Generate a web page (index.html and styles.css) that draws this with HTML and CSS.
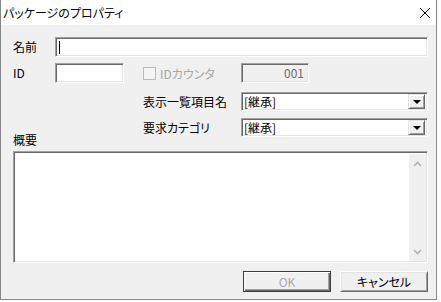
FILE: index.html
```html
<!DOCTYPE html>
<html lang="ja">

<head>
    <meta charset="utf8">
    <title>パッケージのプロパティ</title>
    <link rel="stylesheet" href="styles.css">
</head>

<body>
    <div class="window">
        <div class="titlebar">
            <span class="title">パッケージのプロパティ</span>
            <svg class="close" width="12" height="12" viewBox="0 0 12 12">
                <path d="M1 1 L11 11 M11 1 L1 11" stroke="#000" stroke-width="1" fill="none"/>
            </svg>
        </div>

        <div class="content">
            <div class="row">
                <span class="label">名前</span>
                <div class="field name"><span class="caret"></span></div>
            </div>

            <div class="row id-row">
                <span class="label">ID</span>
                <div class="field id"></div>
                <div class="check">
                    <span class="box"></span>
                    <span class="check-text">IDカウンタ</span>
                </div>
                <div class="field counter">001</div>
            </div>

            <div class="row combo-row first">
                <span class="combo-label">表示一覧項目名</span>
                <div class="field combo">
                    <span class="value">[継承]</span>
                    <span class="drop"><span class="arrow"></span></span>
                </div>
            </div>

            <div class="row combo-row">
                <span class="combo-label">要求カテゴリ</span>
                <div class="field combo">
                    <span class="value">[継承]</span>
                    <span class="drop"><span class="arrow"></span></span>
                </div>
            </div>

            <div class="memo-label">概要</div>
            <div class="field memo">
                <div class="scrollbar">
                    <svg width="9" height="6" viewBox="0 0 9 6">
                        <path d="M1 5 L4.5 1.5 L8 5" stroke="#b4b4b4" stroke-width="1.6" fill="none"/>
                    </svg>
                    <svg width="9" height="6" viewBox="0 0 9 6">
                        <path d="M1 1 L4.5 4.5 L8 1" stroke="#b4b4b4" stroke-width="1.6" fill="none"/>
                    </svg>
                </div>
            </div>

            <div class="buttons">
                <button class="btn default" disabled>OK</button>
                <button class="btn">キャンセル</button>
            </div>
        </div>
    </div>
</body>

</html>
```

FILE: styles.css
```css
* {
    box-sizing: border-box;
}

body {
    margin: 0;
    background-color: #fdfdfd;
    font-family: "Noto Sans CJK JP", "Liberation Sans", sans-serif;
    font-size: 12px;
    font-feature-settings: "palt";
    color: #000;
}

.window {
    width: 437px;
    height: 300px;
    display: flex;
    flex-direction: column;
    border: 1px solid #888;
    border-top: 0 none;
    background-color: #f0f0f0;
}

.titlebar {
    height: 25px;
    flex-shrink: 0;
    display: flex;
    align-items: center;
    justify-content: space-between;
    padding: 0 5px 0 2px;
    background-color: #fff;
}

.titlebar .title {
    line-height: 14px;
    margin-top: 1px;
}

.content {
    display: flex;
    flex-direction: column;
    padding: 12px 8px 7px 12px;
}

/* sunken 3d field */
.field {
    background-color: #fff;
    border: 1px solid;
    border-color: #a0a0a0 #fff #fff #a0a0a0;
    box-shadow: inset 1px 1px #696969, inset -1px -1px #e3e3e3;
}

.row {
    display: flex;
    align-items: center;
    height: 20px;
}

.label {
    width: 42px;
    line-height: 14px;
}

.field.name {
    flex-grow: 1;
    height: 20px;
    padding: 3px 0 0 3px;
}

.caret {
    display: block;
    width: 1px;
    height: 13px;
    background-color: #000;
}

.id-row {
    margin-top: 6px;
}

.field.id {
    width: 69px;
    height: 20px;
}

.check {
    display: flex;
    align-items: center;
    column-gap: 4px;
    width: 98px;
    margin-left: 19px;
    color: #a6a6a6;
}

.check .box {
    width: 13px;
    height: 13px;
    border: 1px solid #b9b9b9;
    background-color: #f4f4f4;
}

.field.counter {
    width: 68px;
    height: 20px;
    padding: 2px 4px 0 0;
    text-align: right;
    line-height: 14px;
    background-color: #f0f0f0;
    color: #6d6d6d;
}

.combo-row {
    height: 19px;
    margin-top: 7px;
    padding-left: 130px;
}

.combo-row.first {
    margin-top: 9px;
}

.combo-label {
    width: 98px;
    line-height: 14px;
}

.field.combo {
    flex-grow: 1;
    height: 19px;
    display: flex;
    align-items: center;
    justify-content: space-between;
    padding: 0 2px 0 2px;
}

.combo .value {
    line-height: 14px;
}

.drop {
    width: 17px;
    height: 15px;
    display: flex;
    align-items: center;
    justify-content: center;
    background-color: #f0f0f0;
    border: 1px solid;
    border-color: #e3e3e3 #696969 #696969 #e3e3e3;
    box-shadow: inset 1px 1px #fff, inset -1px -1px #a0a0a0;
}

.arrow {
    width: 0;
    height: 0;
    border-left: 4px solid transparent;
    border-right: 4px solid transparent;
    border-top: 4px solid #000;
}

.memo-label {
    margin-top: -4px;
    line-height: 14px;
}

.field.memo {
    margin-top: 4px;
    height: 112px;
    display: flex;
    justify-content: flex-end;
    padding: 2px 1px 1px 2px;
}

.scrollbar {
    width: 17px;
    display: flex;
    flex-direction: column;
    align-items: center;
    justify-content: space-between;
    padding: 7px 0 6px;
    background-color: #f0f0f0;
}

.scrollbar svg {
    display: block;
}

.buttons {
    display: flex;
    justify-content: flex-end;
    column-gap: 9px;
    margin-top: 8px;
}

.btn {
    width: 88px;
    height: 21px;
    padding: 0;
    font-family: inherit;
    font-size: 12px;
    font-feature-settings: "palt";
    line-height: 14px;
    color: #000;
    background-color: #f0f0f0;
    border: 1px solid;
    border-color: #fff #696969 #696969 #fff;
    box-shadow: inset 1px 1px #e3e3e3, inset -1px -1px #a0a0a0;
}

.btn.default {
    border-color: #3c3c3c;
    box-shadow: inset 1px 1px #fff, inset -1px -1px #696969, inset -2px -2px #a0a0a0;
    color: #a8a8a8;
}
```
